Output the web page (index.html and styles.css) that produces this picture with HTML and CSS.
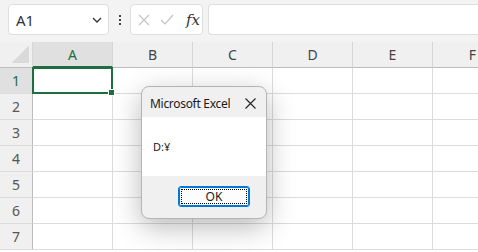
FILE: index.html
```html
<!DOCTYPE html>
<html lang="ja">
<head>
<meta charset="UTF-8">
<title>Excel</title>
<link rel="stylesheet" href="styles.css">
</head>
<body>

<!-- FORMULA BAR -->
<div class="toolbar">
    <div class="namebox">
        <span>A1</span>
        <svg width="10" height="6" viewBox="0 0 10 6"><polyline points="1,1 5,5 9,1" fill="none" stroke="#333" stroke-width="1.3"/></svg>
    </div>
    <div class="dots"><i></i><i></i><i></i></div>
    <div class="fxbox">
        <svg width="12" height="12" viewBox="0 0 12 12"><path d="M1 1 L11 11 M11 1 L1 11" stroke="#c4c4c4" stroke-width="1.2"/></svg>
        <svg width="14" height="11" viewBox="0 0 14 11"><polyline points="1,6 5,10 13,1" fill="none" stroke="#c4c4c4" stroke-width="1.2"/></svg>
        <span class="fx">fx</span>
    </div>
    <div class="formula"></div>
</div>

<!-- SHEET -->
<div class="sheetwrap">
<div class="sheet">
    <div class="corner"><span></span></div>
    <div class="colhead active">A</div>
    <div class="colhead">B</div>
    <div class="colhead">C</div>
    <div class="colhead">D</div>
    <div class="colhead">E</div>
    <div class="colhead">F</div>

    <div class="rowhead active">1</div>
    <div class="cell selected"></div><div class="cell"></div><div class="cell"></div><div class="cell"></div><div class="cell"></div><div class="cell"></div>
    <div class="rowhead">2</div>
    <div class="cell"></div><div class="cell"></div><div class="cell"></div><div class="cell"></div><div class="cell"></div><div class="cell"></div>
    <div class="rowhead">3</div>
    <div class="cell"></div><div class="cell"></div><div class="cell"></div><div class="cell"></div><div class="cell"></div><div class="cell"></div>
    <div class="rowhead">4</div>
    <div class="cell"></div><div class="cell"></div><div class="cell"></div><div class="cell"></div><div class="cell"></div><div class="cell"></div>
    <div class="rowhead">5</div>
    <div class="cell"></div><div class="cell"></div><div class="cell"></div><div class="cell"></div><div class="cell"></div><div class="cell"></div>
    <div class="rowhead">6</div>
    <div class="cell"></div><div class="cell"></div><div class="cell"></div><div class="cell"></div><div class="cell"></div><div class="cell"></div>
    <div class="rowhead">7</div>
    <div class="cell"></div><div class="cell"></div><div class="cell"></div><div class="cell"></div><div class="cell"></div><div class="cell"></div>
</div>
</div>

<!-- MESSAGE BOX -->
<div class="dialog">
    <div class="dlg-title">
        <span>Microsoft Excel</span>
        <svg width="11" height="11" viewBox="0 0 11 11"><path d="M0.5 0.5 L10.5 10.5 M10.5 0.5 L0.5 10.5" stroke="#222" stroke-width="1.1"/></svg>
    </div>
    <div class="dlg-body">D:¥</div>
    <div class="dlg-foot">
        <button class="ok"><span>OK</span></button>
    </div>
</div>

</body>
</html>
```

FILE: styles.css
```css
*{
    margin:0;
    padding:0;
    box-sizing:border-box;
}

body{
    width:478px;
    height:252px;
    overflow:hidden;
    background:#fff;
    font-family:"Noto Sans","Noto Sans CJK JP",sans-serif;
    position:relative;
}

/* FORMULA BAR */

.toolbar{
    height:42px;
    background:#f3f3f3;
    display:flex;
    align-items:flex-start;
    padding:4px 0 0 8px;
}

.namebox{
    width:101px;
    height:31px;
    background:#fff;
    border:1px solid #dedede;
    border-radius:4px;
    display:flex;
    align-items:center;
    justify-content:space-between;
    padding:0 6px 0 7px;
    font-size:15px;
    color:#333;
}

.dots{
    width:21px;
    height:31px;
    display:flex;
    flex-direction:column;
    align-items:center;
    justify-content:center;
    gap:2px;
}

.dots i{
    width:2px;
    height:2px;
    background:#444;
}

.fxbox{
    width:73px;
    height:31px;
    background:#fff;
    border:1px solid #dedede;
    border-radius:4px;
    display:flex;
    align-items:center;
    padding:0 0 0 7px;
    gap:10px;
}

.fx{
    font-family:"DejaVu Serif",serif;
    font-style:italic;
    font-size:15px;
    color:#333;
    margin-left:2px;
}

.formula{
    flex:1;
    height:31px;
    margin-left:5px;
    background:#fff;
    border:1px solid #dedede;
    border-right:none;
    border-radius:4px 0 0 4px;
}

/* SHEET */

.sheetwrap{
    width:478px;
    overflow:hidden;
}

.sheet{
    display:grid;
    grid-template-columns:33px repeat(6,80px);
    grid-template-rows:26px repeat(7,26px);
}

.corner{
    background:#f0f0f0;
    border-right:1px solid #d6d6d6;
    border-bottom:1px solid #bdbdbd;
    display:flex;
    align-items:flex-end;
    justify-content:flex-end;
    padding:0 3px 4px 0;
}

.corner span{
    width:18px;
    height:18px;
    background:linear-gradient(to bottom right,transparent 50%,#dadada 50%);
}

.colhead{
    background:#f0f0f0;
    border-right:1px solid #d6d6d6;
    border-bottom:1px solid #bdbdbd;
    display:flex;
    align-items:center;
    justify-content:center;
    font-size:14px;
    color:#444;
}

.colhead.active{
    background:#e0e0e0;
    color:#1e6e42;
    border-bottom:2px solid #1e6e42;
}

.rowhead{
    background:#f0f0f0;
    border-right:1px solid #bdbdbd;
    border-bottom:1px solid #dcdcdc;
    display:flex;
    align-items:center;
    justify-content:center;
    font-size:14px;
    color:#555;
}

.rowhead.active{
    background:#e0e0e0;
    color:#1e6e42;
}

.cell{
    border-right:1px solid #dcdcdc;
    border-bottom:1px solid #dcdcdc;
}

.cell.selected{
    position:relative;
}

.cell.selected::after{
    content:"";
    position:absolute;
    left:-1px;
    top:-1px;
    right:-1px;
    bottom:-1px;
    border:2px solid #1e6e42;
}

.cell.selected::before{
    content:"";
    position:absolute;
    right:-3px;
    bottom:-3px;
    width:5px;
    height:5px;
    background:#1e6e42;
    border:1px solid #fff;
    z-index:2;
}

/* MESSAGE BOX */

.dialog{
    position:absolute;
    left:141px;
    top:86px;
    width:126px;
    height:133px;
    border:1px solid #b4b4b4;
    border-radius:8px;
    overflow:hidden;
    background:#f0f0f0;
    box-shadow:0 8px 28px rgba(0,0,0,.28);
    display:flex;
    flex-direction:column;
    font-size:12px;
    color:#1a1a1a;
}

.dlg-title{
    height:30px;
    display:flex;
    align-items:center;
    justify-content:space-between;
    padding:2px 10px 0 8px;
    font-size:12px;
    letter-spacing:-0.3px;
}

.dlg-body{
    height:59px;
    background:#fff;
    display:flex;
    align-items:center;
    padding:0 0 0 11px;
    font-size:11px;
}

.dlg-foot{
    flex:1;
    display:flex;
    justify-content:flex-end;
    padding:10px 16px 0 0;
}

.ok{
    width:72px;
    height:21px;
    border:1px solid #0078d7;
    border-radius:3px;
    background:#fdfdfd;
    box-shadow:inset 0 0 0 1px #0078d7;
    padding:2px;
    font-family:inherit;
    font-size:12px;
    color:#1a1a1a;
}

.ok span{
    display:flex;
    width:100%;
    height:100%;
    align-items:center;
    justify-content:center;
    border:1px dotted #000;
}
```
